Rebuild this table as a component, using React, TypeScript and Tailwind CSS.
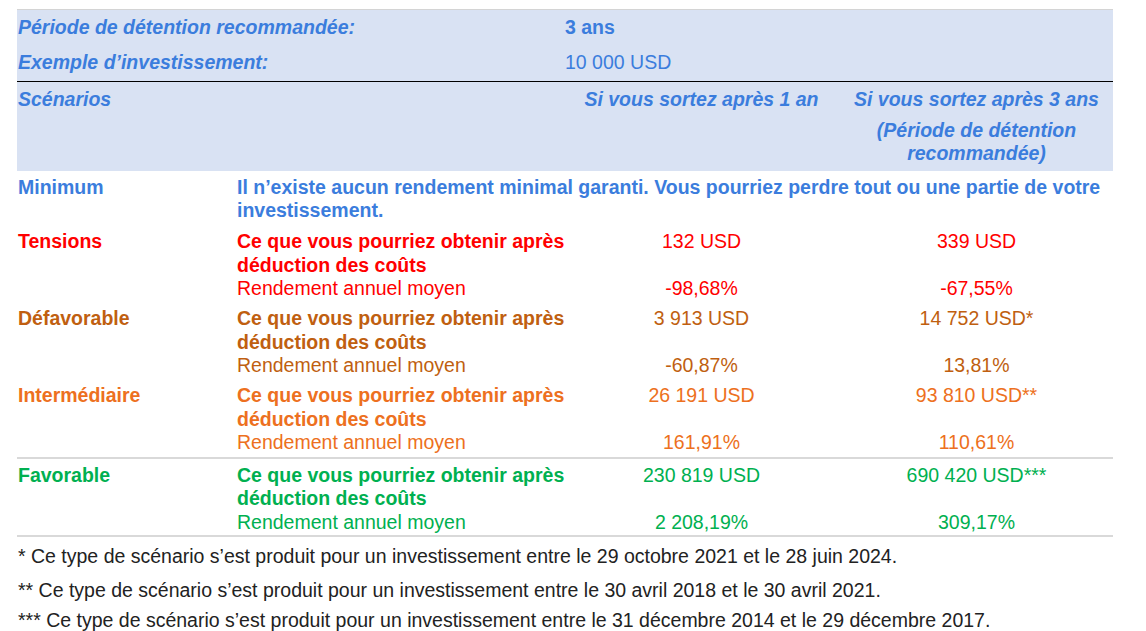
const blue = "text-[#3b7ddd]";

const scenarios = [
  {
    name: "Tensions",
    color: "text-[#ff0000]",
    y1: "132 USD",
    y3: "339 USD",
    r1: "-98,68%",
    r3: "-67,55%",
    line: false,
  },
  {
    name: "Défavorable",
    color: "text-[#c05f10]",
    y1: "3 913 USD",
    y3: "14 752 USD*",
    r1: "-60,87%",
    r3: "13,81%",
    line: false,
  },
  {
    name: "Intermédiaire",
    color: "text-[#ed7020]",
    y1: "26 191 USD",
    y3: "93 810 USD**",
    r1: "161,91%",
    r3: "110,61%",
    line: false,
  },
  {
    name: "Favorable",
    color: "text-[#00b050]",
    y1: "230 819 USD",
    y3: "690 420 USD***",
    r1: "2 208,19%",
    r3: "309,17%",
    line: true,
  },
];

const cols = "grid grid-cols-[218px_328px_277px_273px]";

export default function App() {
  return (
    <div className="min-h-screen bg-white pt-[9px] pl-[17px] text-[19.5px] leading-[23.5px] [font-family:'Liberation_Sans',Arial,sans-serif]">
      <div className="w-[1096px]">
        <div className="border-t border-[#d4d4d4] bg-[#d9e2f3]">
          <div className={`${cols} h-[35px] items-center font-bold ${blue}`}>
            <div className="pl-px italic whitespace-nowrap">Période de détention recommandée:</div>
            <div />
            <div className="col-span-2 pl-[2px]">3 ans</div>
          </div>
          <div className={`${cols} h-[36px] items-center ${blue}`}>
            <div className="pl-px font-bold italic whitespace-nowrap">Exemple d’investissement:</div>
            <div />
            <div className="col-span-2 pl-[2px]">10 000 USD</div>
          </div>
          <div className={`${cols} border-t border-black pt-[6px] pb-[5px] font-bold italic ${blue}`}>
            <div className="pl-px">Scénarios</div>
            <div />
            <div className="text-center whitespace-nowrap">Si vous sortez après 1 an</div>
            <div className="text-center">
              <div className="mb-[7px] whitespace-nowrap">Si vous sortez après 3 ans</div>
              <div className="px-[30px]">(Période de détention recommandée)</div>
            </div>
          </div>
        </div>

        <div className={`${cols} pt-[5px] font-bold ${blue}`}>
          <div className="pl-px">Minimum</div>
          <div className="col-span-3 pl-[2px]">
            Il n’existe aucun rendement minimal garanti. Vous pourriez perdre tout ou une partie de votre investissement.
          </div>
        </div>

        {scenarios.map((s, i) => (
          <div
            key={s.name}
            className={`${cols} ${s.color} ${
              s.line ? "mt-[2px] border-t-2 border-[#d9d9d9] pt-[5px]" : i === 0 ? "pt-[7.5px]" : "pt-[6.5px]"
            }`}
          >
            <div className="pl-px font-bold">{s.name}</div>
            <div className="pl-[2px]">
              <div className="w-[340px] font-bold">
                Ce que vous pourriez obtenir après
                <br />
                déduction des coûts
              </div>
              <div>Rendement annuel moyen</div>
            </div>
            <div className="flex flex-col items-center justify-between">
              <div>{s.y1}</div>
              <div>{s.r1}</div>
            </div>
            <div className="flex flex-col items-center justify-between">
              <div>{s.y3}</div>
              <div>{s.r3}</div>
            </div>
          </div>
        ))}
        <div className="mt-px border-t-2 border-[#d9d9d9]" />

        <div className="pt-[8px] pl-px text-[#222]">
          <p>* Ce type de scénario s’est produit pour un investissement entre le 29 octobre 2021 et le 28 juin 2024.</p>
          <p className="mt-[10.5px]">** Ce type de scénario s’est produit pour un investissement entre le 30 avril 2018 et le 30 avril 2021.</p>
          <p className="mt-[6.5px]">*** Ce type de scénario s’est produit pour un investissement entre le 31 décembre 2014 et le 29 décembre 2017.</p>
        </div>
      </div>
    </div>
  );
}
